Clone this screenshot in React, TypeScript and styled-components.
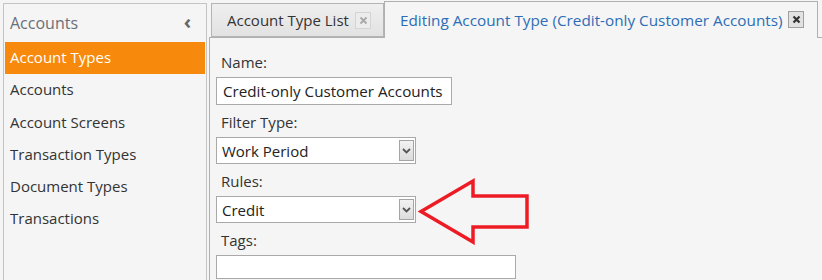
import React from 'react'
import styled, { createGlobalStyle } from 'styled-components'

const GlobalStyle = createGlobalStyle`
  html, body {
    margin: 0;
    padding: 0;
    background: #f5f5f5;
    font-family: 'Open Sans', 'Noto Sans', sans-serif;
    color: #333;
  }
`

const menuItems = ['Account Types', 'Accounts', 'Account Screens', 'Transaction Types', 'Document Types', 'Transactions']

const ChevronDown = () => (
  <svg width="9" height="6" viewBox="0 0 9 6">
    <path d="M1 1 L4.5 4.5 L8 1" fill="none" stroke="#555" strokeWidth="1.8" />
  </svg>
)

const CloseMark = ({ active }: { active?: boolean }) => (
  <svg width="9" height="9" viewBox="0 0 9 9">
    <path
      d="M1.5 1.5 L7.5 7.5 M7.5 1.5 L1.5 7.5"
      stroke={active ? '#333' : '#a8a8a8'}
      strokeWidth={active ? 2.2 : 1.8}
    />
  </svg>
)

const Select = ({ value }: { value: string }) => (
  <SelectBox>
    <span>{value}</span>
    <DropButton>
      <ChevronDown />
    </DropButton>
  </SelectBox>
)

export default function App() {
  return (
    <Page>
      <GlobalStyle />
      <Sidebar>
        <SidebarHeader>
          <span>Accounts</span>
          <Collapse>‹</Collapse>
        </SidebarHeader>
        {menuItems.map((item, i) => (
          <MenuItem key={item} active={i === 0}>
            {item}
          </MenuItem>
        ))}
      </Sidebar>
      <Main>
        <TabStrip>
          <Tab width={173}>
            <TabTitle>Account Type List</TabTitle>
            <CloseBox>
              <CloseMark />
            </CloseBox>
          </Tab>
          <Tab active width={434}>
            <TabTitle>Editing Account Type (Credit-only Customer Accounts)</TabTitle>
            <CloseBox active>
              <CloseMark active />
            </CloseBox>
          </Tab>
        </TabStrip>
        <Panel>
          <Field>
            <Label>Name:</Label>
            <TextInput width={236} height={28}>
              Credit-only Customer Accounts
            </TextInput>
          </Field>
          <Field>
            <Label>Filter Type:</Label>
            <Select value="Work Period" />
          </Field>
          <Field>
            <Label>Rules:</Label>
            <Select value="Credit" />
          </Field>
          <Field>
            <Label>Tags:</Label>
            <TextInput width={300} height={24} />
          </Field>
        </Panel>
      </Main>
      <Arrow width="112" height="68" viewBox="0 0 112 68">
        <path
          d="M3 34.5 L55 4 L55 19 L109 19 L109 50 L55 50 L55 65 Z"
          fill="none"
          stroke="#ed1c24"
          strokeWidth="3.5"
          strokeLinejoin="miter"
        />
      </Arrow>
    </Page>
  )
}

const Page = styled.div`
  position: relative;
  display: flex;
  align-items: flex-start;
  gap: 2px;
  width: 822px;
  height: 280px;
  overflow: hidden;
`

const Sidebar = styled.div`
  margin: 3px 0 0 3px;
  width: 204px;
  height: 300px;
  box-sizing: border-box;
  border: 1px solid #c4c4c4;
  border-bottom: none;
  padding: 0 1px;
  background: #f5f5f5;
  flex-shrink: 0;
`

const SidebarHeader = styled.div`
  display: flex;
  align-items: center;
  justify-content: space-between;
  height: 38px;
  padding: 0 14px 0 5px;
  font-size: 16px;
  color: #6b6f78;
`

const Collapse = styled.span`
  font-size: 20px;
  font-weight: 700;
  color: #666;
  line-height: 1;
  margin-top: -3px;
`

const MenuItem = styled.div<{ active?: boolean }>`
  height: 32.3px;
  line-height: 31px;
  padding-left: 5px;
  font-size: 15px;
  color: ${p => (p.active ? '#fff' : '#333')};
  background: ${p => (p.active ? '#f7890c' : 'transparent')};
`

const Main = styled.div`
  flex: 1;
  min-width: 0;
  display: flex;
  flex-direction: column;
`

const TabStrip = styled.div`
  display: flex;
  align-items: flex-end;
  height: 37px;
  padding-left: 2px;
  position: relative;
  z-index: 1;
`

const Tab = styled.div<{ active?: boolean; width: number }>`
  display: flex;
  flex-shrink: 0;
  align-items: center;
  gap: 5px;
  box-sizing: border-box;
  width: ${p => p.width}px;
  height: ${p => (p.active ? '37px' : '34px')};
  padding: ${p => (p.active ? '0 13px 1px 15px' : '0 12px 0 15px')};
  margin-bottom: ${p => (p.active ? '-1px' : '0')};
  border: 1px solid ${p => (p.active ? '#b0b0b0' : '#b4b4b4')};
  border-bottom: ${p => (p.active ? 'none' : '1px solid #b4b4b4')};
  background: ${p => (p.active ? '#f5f5f5' : 'linear-gradient(#efefef, #e2e2e2)')};
  color: ${p => (p.active ? '#2d6db5' : '#333')};
  font-size: ${p => (p.active ? '15.3px' : '15px')};
`

const TabTitle = styled.span`
  flex: 1;
  min-width: 0;
  overflow: hidden;
  white-space: nowrap;
`

const CloseBox = styled.span<{ active?: boolean }>`
  display: flex;
  flex-shrink: 0;
  align-items: center;
  justify-content: center;
  width: 16px;
  height: 17px;
  box-sizing: border-box;
  border: 1px solid ${p => (p.active ? '#a0a0a0' : '#d4d4d4')};
  background: ${p => (p.active ? '#e2e2e2' : '#ececec')};
`

const Panel = styled.div`
  border-top: 1px solid #b0b0b0;
  border-left: 1px solid #b0b0b0;
  height: 260px;
  padding: 12px 0 0 6px;
  display: flex;
  flex-direction: column;
  gap: 5px;
`

const Field = styled.div`
  display: flex;
  flex-direction: column;
  gap: 3px;
`

const Label = styled.div`
  height: 24px;
  line-height: 24px;
  padding-left: 5px;
  font-size: 15px;
  color: #333;
`

const TextInput = styled.div<{ width: number; height: number }>`
  width: ${p => p.width}px;
  height: ${p => p.height}px;
  box-sizing: border-box;
  border: 1px solid #a9a9a9;
  background: #fff;
  padding-left: 6px;
  line-height: ${p => p.height - 2}px;
  font-size: 15.2px;
  color: #222;
`

const SelectBox = styled.div`
  display: flex;
  align-items: center;
  justify-content: space-between;
  width: 200px;
  height: 27px;
  box-sizing: border-box;
  border: 1px solid #a9a9a9;
  background: #fff;
  padding: 0 1px 0 5px;
  font-size: 15px;
  color: #222;
`

const DropButton = styled.span`
  display: flex;
  align-items: center;
  justify-content: center;
  width: 15px;
  height: 21px;
  box-sizing: border-box;
  border: 1px solid #a4a4a4;
  background: linear-gradient(#f2f2f2, #dcdcdc);
`

const Arrow = styled.svg`
  position: absolute;
  left: 418px;
  top: 177px;
`
